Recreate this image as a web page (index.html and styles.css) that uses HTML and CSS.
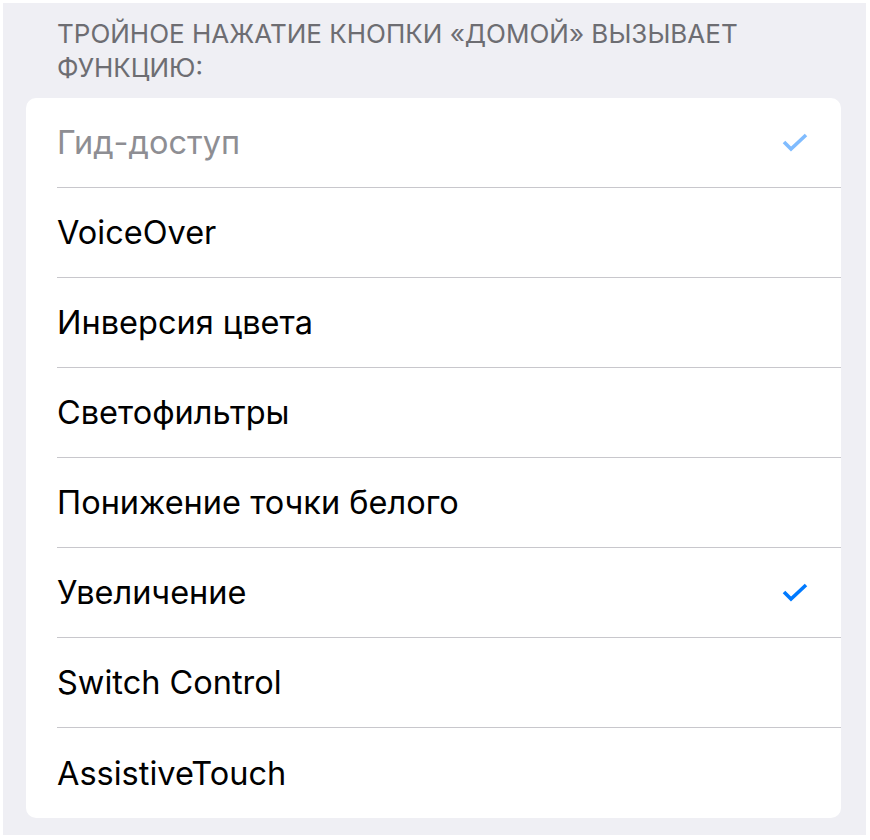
FILE: index.html
```html
<!DOCTYPE html>
<html lang="ru">
<head>
    <meta charset="UTF-8">
    <meta name="viewport" content="width=device-width, initial-scale=1.0">
    <title>Тройное нажатие</title>
    <link rel="stylesheet" href="styles.css">
</head>
<body>
    <div class="screen">
        <div class="section-header">Тройное нажатие кнопки «Домой» вызывает функцию:</div>

        <!-- Options list -->
        <div class="card">
            <div class="row disabled">
                <span class="label">Гид-доступ</span>
                <svg class="check" width="28" height="22" viewBox="0 0 28 22"><polyline points="3,10 10,17 25,3" /></svg>
            </div>
            <div class="row"><span class="label">VoiceOver</span></div>
            <div class="row"><span class="label">Инверсия цвета</span></div>
            <div class="row"><span class="label">Светофильтры</span></div>
            <div class="row"><span class="label">Понижение точки белого</span></div>
            <div class="row">
                <span class="label">Увеличение</span>
                <svg class="check" width="28" height="22" viewBox="0 0 28 22"><polyline points="3,10 10,17 25,3" /></svg>
            </div>
            <div class="row"><span class="label">Switch Control</span></div>
            <div class="row"><span class="label">AssistiveTouch</span></div>
        </div>
    </div>
</body>
</html>
```

FILE: styles.css
```css
body {
    margin: 0;
    padding: 0;
    background: #fff;
    font-family: 'Inter', 'Noto Sans', sans-serif;
}
.screen {
    margin: 3px 4px 0 3px;
    height: 832px;
    background: #efeff4;
    padding: 0 25px 0 23px;
    box-sizing: border-box;
    overflow: hidden;
}
.section-header {
    padding: 14px 60px 0 31px;
    height: 95px;
    box-sizing: border-box;
    font-size: 26px;
    line-height: 34px;
    text-transform: uppercase;
    color: #6d6d72;
}
.card {
    background: #fff;
    border-radius: 10px;
    overflow: hidden;
}
.row {
    height: 90px;
    margin-left: 31px;
    padding-right: 32px;
    display: flex;
    align-items: center;
    justify-content: space-between;
    border-bottom: 1px solid #c8c7cc;
    box-sizing: border-box;
}
.row:last-child {
    border-bottom: none;
}
.label {
    font-size: 32.5px;
    color: #000;
}
.row.disabled .label {
    color: #8e8e93;
}
.check {
    display: block;
    fill: none;
    stroke: #007aff;
    stroke-width: 3.6;
    stroke-linejoin: miter;
}
.row.disabled .check {
    stroke: #80bcff;
}
```
